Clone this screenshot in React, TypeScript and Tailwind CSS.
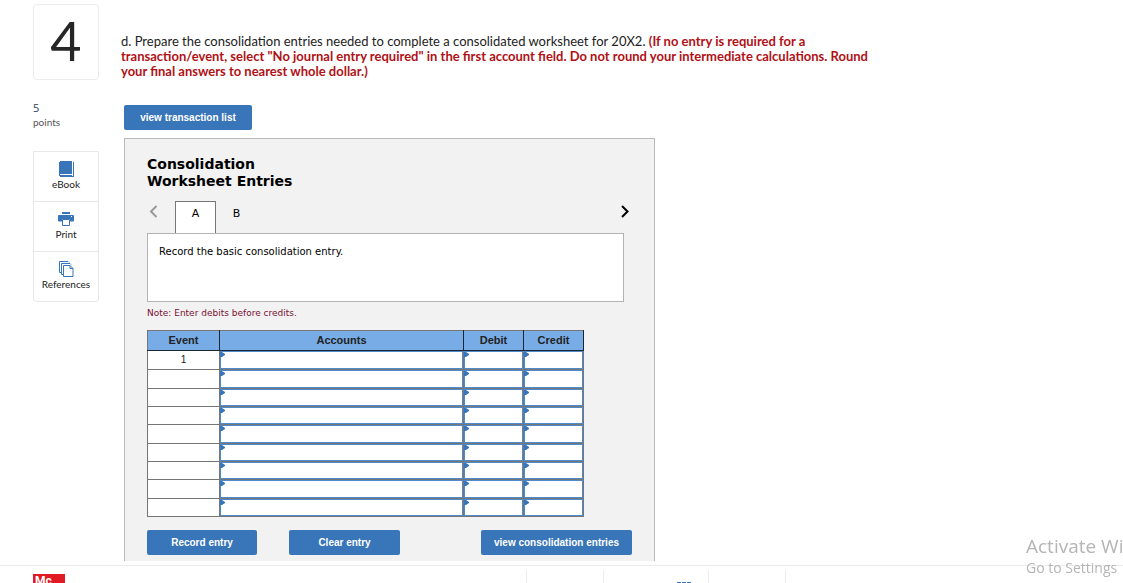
import { useState } from "react";

const ROWS = [1, 2, 3, 4, 5, 6, 7, 8, 9];
const FIELDS = ["Account", "Debit", "Credit"];

const TABS = [
  { id: "A", text: "Record the basic consolidation entry." },
  { id: "B", text: "" },
];

function BookIcon() {
  return (
    <svg width="15" height="16" viewBox="0 0 15 16" fill="#3875b9" shapeRendering="crispEdges">
      <path d="M1 0h12v13H1zM0 1h1v14H0zM1 14h12v1H1zM1 15h14v1H1zM14 1h1v15h-1z" />
    </svg>
  );
}

function PrintIcon() {
  return (
    <svg width="16" height="16" viewBox="0 0 16 16" fill="#3875b9">
      <path d="M4 1h8v2H4z" />
      <path d="M1 4h14a1 1 0 0 1 1 1v4.500a1 1 0 0 1-1 1h-3V8H4v2.500H1a1 1 0 0 1-1-1V5a1 1 0 0 1 1-1z" />
      <path d="M4.500 8.500h7v6h-7z" fill="#fff" stroke="#3875b9" />
      <path d="M13 5h1v1h-1z" fill="#fff" />
    </svg>
  );
}

function ReferencesIcon() {
  return (
    <svg width="15" height="16" viewBox="0 0 15 16" fill="none" stroke="#3875b9">
      <path d="M4.500 4.500h6.500l3 3v8H4.500z" />
      <path d="M11 4.500v3h3" />
      <path d="M4 13.500H2.500v-11H11l1 1" />
      <path d="M2 11.500H.5V.5H9l1 1" />
    </svg>
  );
}

function BlueButton({ className, children }: { className: string; children: string }) {
  return (
    <button
      type="button"
      className={`h-[25px] rounded-xs bg-[#3875b9] font-['Liberation_Sans',sans-serif] text-[10px] font-bold text-white hover:bg-[#2d629e] ${className}`}
    >
      {children}
    </button>
  );
}

function Sidebar() {
  const item = "flex h-[50px] flex-col items-center border-b border-[#e8e8e8] pt-[9px] text-[10px] leading-[14px] text-[#222]";
  return (
    <aside className="w-[66px] shrink-0 pt-1 font-['Open_Sans',sans-serif]">
      <div className="flex h-[76px] items-center justify-center rounded border border-[#ececec] pb-1 font-['Lato',sans-serif] text-[54px] text-[#262626]">
        4
      </div>
      <div className="mt-[21px] text-[11px] leading-[14px] text-[#2b3e66]">5</div>
      <div className="font-['Lato',sans-serif] text-[10px] leading-[14px] text-[#555]">points</div>
      <nav className="mt-[22px] flex flex-col rounded-b border border-b-0 border-[#e8e8e8] font-['Lato',sans-serif]">
        <a href="#ebook" className={item}><BookIcon />eBook</a>
        <a href="#print" className={item}><PrintIcon />Print</a>
        <a href="#references" className={`${item} rounded-b`}><ReferencesIcon />References</a>
      </nav>
    </aside>
  );
}

function JournalTable() {
  const th = "border border-[#1d2733] border-t-[#767676] p-0";
  return (
    <table className="h-[187px] w-[437px] table-fixed border-collapse bg-white text-center font-['Liberation_Sans',sans-serif] text-[11px] text-[#222]">
      <colgroup>
        <col className="w-[72px]" />
        <col className="w-[244px]" />
        <col className="w-[60px]" />
        <col className="w-[60px]" />
      </colgroup>
      <thead>
        <tr className="h-[20px] bg-[#78ace6]">
          <th className={`${th} border-l-[#767676]`}>Event</th>
          <th className={th}>Accounts</th>
          <th className={th}>Debit</th>
          <th className={th}>Credit</th>
        </tr>
      </thead>
      <tbody>
        {ROWS.map((row) => (
          <tr key={row} className="h-[18px] first:h-[19px]">
            <td className="border border-[#767676] p-0 text-[10px] leading-[16px]">{row === 1 ? "1" : ""}</td>
            {FIELDS.map((field) => (
              <td key={field} className="relative h-[18px] border border-[#767676] p-0">
                <input
                  aria-label={`${field} ${row}`}
                  className="block h-full w-full border border-[#4f8acb] bg-white px-2 text-[11px] leading-[14px] outline-none"
                />
                <svg className="pointer-events-none absolute left-0 top-px" width="5" height="5" viewBox="0 0 5 5" fill="#3875b9">
                  <path d="M0 0h2l3 2v1L2 5H0z" />
                </svg>
              </td>
            ))}
          </tr>
        ))}
      </tbody>
    </table>
  );
}

function Worksheet() {
  const [tab, setTab] = useState("A");
  const current = TABS.find((t) => t.id === tab);

  return (
    <section className="ml-[3px] mt-2 w-[531px] border border-[#b9b9b9] bg-[#f2f2f2] px-[22px] pb-5 pt-[17px] font-['DejaVu_Sans',sans-serif] text-black">
      <h2 className="text-[14px] font-bold leading-[17px]">
        Consolidation
        <br />
        Worksheet Entries
      </h2>
      <div className="mt-[11px] flex h-[32px] w-[485px] items-start">
        <button type="button" aria-label="Previous" className="mt-1 w-[28px] pl-[2px]">
          <svg width="9" height="13" viewBox="0 0 9 13" fill="none" stroke="#999" strokeWidth="2">
            <path d="M7.500 1L2 6.500 7.500 12" />
          </svg>
        </button>
        {TABS.map((t) => (
          <button
            key={t.id}
            type="button"
            onClick={() => setTab(t.id)}
            className={`flex h-[32px] w-[41px] justify-center text-[11px] leading-[14px] ${t.id === tab ? "border border-b-0 border-[#777] bg-white pt-[5px]" : "pt-[6px]"}`}
          >
            {t.id}
          </button>
        ))}
        <button type="button" aria-label="Next" className="ml-auto mt-1">
          <svg width="12" height="13" viewBox="0 0 12 13" fill="none" stroke="#000" strokeWidth="2">
            <path d="M2 1l5.500 5.500L2 12" />
          </svg>
        </button>
      </div>
      <p className="h-[69px] w-[477px] border border-[#b3b3b3] bg-white px-[11px] pt-[11px] text-[10px] leading-[14px]">
        {current?.text}
      </p>
      <p className="mb-[10px] mt-1 text-[9px] leading-[14px] text-[#7b1034]">Note: Enter debits before credits.</p>
      <JournalTable />
      <div className="mt-[13px] flex w-[485px]">
        <BlueButton className="w-[110px]">Record entry</BlueButton>
        <BlueButton className="ml-8 w-[111px]">Clear entry</BlueButton>
        <BlueButton className="ml-auto w-[151px]">view consolidation entries</BlueButton>
      </div>
    </section>
  );
}

function Footer() {
  return (
    <footer className="flex h-[18px] shrink-0 overflow-hidden border-t border-[#ececec] pl-[33px]">
      <div className="mt-2 h-8 w-8 shrink-0 bg-[#e21a23] pl-[2px] font-['Roboto',sans-serif] text-[12px] font-bold leading-[14px] text-white">
        Mc
      </div>
      <div className="ml-[461px] mt-1 flex h-10 divide-x divide-[#ececec] border-x border-[#ececec]">
        <div className="w-[77px]" />
        <div className="flex w-[105px] justify-end pr-[17px] pt-3">
          <svg width="14" height="14" viewBox="0 0 14 14" fill="#3875b9">
            <path d="M0 0h4v4H0zM5 0h4v4H5zM10 0h4v4h-4zM0 5h4v4H0zM5 5h4v4H5zM10 5h4v4h-4z" />
          </svg>
        </div>
        <div className="w-[76px]" />
      </div>
    </footer>
  );
}

export default function App() {
  return (
    <div className="flex h-screen flex-col overflow-hidden bg-white">
      <div className="mb-1 flex min-h-0 flex-1 gap-[22px] overflow-hidden pl-[33px]">
        <Sidebar />
        <main className="min-w-0 flex-1 pt-[34px]">
          <p className="font-['Lato',sans-serif] text-[13px] leading-[15px] text-[#222]">
            d. Prepare the consolidation entries needed to complete a consolidated worksheet for 20X2.{" "}
            <strong className="font-bold text-[#b01116]">
              (If no entry is required for a
              <br />
              transaction/event, select "No journal entry required" in the first account field. Do not round your intermediate calculations. Round
              <br />
              your final answers to nearest whole dollar.)
            </strong>
          </p>
          <BlueButton className="ml-[3px] mt-[26px] block w-[128px]">view transaction list</BlueButton>
          <Worksheet />
        </main>
      </div>
      <Footer />
      <div className="pointer-events-none fixed bottom-0 right-0 w-[97px] whitespace-nowrap font-['Open_Sans',sans-serif] text-[#b5b5b5]">
        <div className="text-[19px] leading-[24px]">Activate Wi</div>
        <div className="pb-[5px] text-[14px] leading-[20px]">Go to Settings</div>
      </div>
    </div>
  );
}
